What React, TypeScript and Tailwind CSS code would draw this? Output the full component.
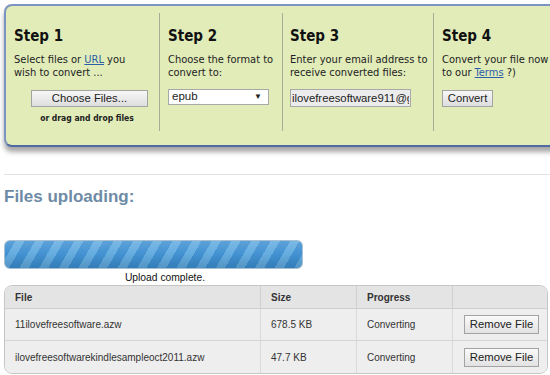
import React from 'react';

const verdana = { fontFamily: '"DejaVu Sans Condensed", Tahoma, Verdana, sans-serif' };

const rows = [
  { name: '11ilovefreesoftware.azw', size: '678.5 KB' },
  { name: 'ilovefreesoftwarekindlesampleoct2011.azw', size: '47.7 KB' },
];

function StepHead({ n }: { n: number }) {
  return <h2 className="pt-[14px] text-[15px] leading-[18px] font-bold text-[#111]">Step {n}</h2>;
}

export default function App() {
  return (
    <div className="w-[550px] h-[375px] overflow-hidden bg-white font-['Liberation_Sans',Arial,sans-serif] text-[#222]">
      {/* converter steps panel */}
      <div
        className="ml-1 mt-1 w-[620px] h-[143px] rounded-[8px] border-2 border-[#7d94c0] border-b-[#4e69a3] bg-[#e1ecb9] shadow-[0_5px_5px_rgba(0,0,0,0.35)] flex"
        style={verdana}
      >
        <div className="mt-[7px] h-[118px] w-[154px] border-r border-[#a9ad98] pl-2">
          <StepHead n={1} />
          <p className="mt-[8px] text-[11px] leading-[13px]">
            Select files or <span className="text-[#2b5ea8] underline">URL</span> you
            <br />
            wish to convert ...
          </p>
          <div className="mt-[11px] ml-[17px] w-[117px] h-[17px] flex items-center justify-center border border-[#a3a3a3] bg-gradient-to-b from-[#f7f7f7] to-[#dedede] text-[11.3px] font-['Liberation_Sans',Arial,sans-serif]">
            Choose Files...
          </div>
          <p className="mt-[6px] w-[146px] text-center text-[8.5px] leading-[11px] font-bold">or drag and drop files</p>
        </div>

        <div className="mt-[7px] h-[118px] w-[123px] border-r border-[#a9ad98] pl-2">
          <StepHead n={2} />
          <p className="mt-[8px] text-[11px] leading-[13px]">
            Choose the format to
            <br />
            convert to:
          </p>
          <div className="mt-[10px] w-[101px] h-[16px] flex items-center justify-between border border-[#a9a9a9] bg-white pl-[3px] pr-[6px] text-[11.5px] font-['Liberation_Sans',Arial,sans-serif]">
            <span>epub</span>
            <span className="text-[8px]">▼</span>
          </div>
        </div>

        <div className="mt-[7px] h-[118px] w-[151px] border-r border-[#a9ad98] pl-[7px]">
          <StepHead n={3} />
          <p className="mt-[8px] text-[11px] leading-[13px] whitespace-nowrap">
            Enter your email address to
            <br />
            receive converted files:
          </p>
          <input
            readOnly
            value="ilovefreesoftware911@gmail.com"
            className="mt-[10px] w-[121px] h-[18px] border border-[#a9a9a9] bg-[#ececec] px-[1px] text-[11.3px] text-[#222] outline-none font-['Liberation_Sans',Arial,sans-serif]"
          />
        </div>

        <div className="mt-[7px] h-[118px] flex-1 pl-2">
          <StepHead n={4} />
          <p className="mt-[8px] text-[11px] leading-[13px] whitespace-nowrap">
            Convert your file now (and agree
            <br />
            to our <span className="text-[#2b5ea8] underline">Terms</span> ?)
          </p>
          <div className="mt-[11px] w-[51px] h-[17px] flex items-center justify-center border border-[#a3a3a3] bg-gradient-to-b from-[#f7f7f7] to-[#dedede] text-[11.3px] font-['Liberation_Sans',Arial,sans-serif]">
            Convert
          </div>
        </div>
      </div>

      <div className="ml-1 mt-[27px] border-t border-[#e3e3e3]" />

      <h1 className="ml-1 mt-[11px] text-[17px] leading-[22px] font-bold text-[#6e8ba6]">Files uploading:</h1>

      {/* progress bar */}
      <div className="ml-1 mt-[32px] w-[299px] h-[29px] rounded-[6px] border border-[#a9bfd2] bg-[linear-gradient(to_bottom,rgba(255,255,255,0.18),rgba(255,255,255,0.05)_45%,rgba(0,0,0,0.12)),repeating-linear-gradient(120deg,#3a8dd0_0px,#3a8dd0_9px,#5ea9df_9px,#5ea9df_17px)]" />
      <p className="mt-[2px] w-[330px] text-center text-[10.3px] leading-[13px] text-[#111]">Upload complete.</p>

      {/* file table */}
      <div className="ml-1 mt-[1px] w-[544px] rounded-[8px] border border-[#c6c6c6] overflow-hidden text-[10px] text-[#333]">
        <div className="grid grid-cols-[256px_96px_96px_1fr] h-[23px] bg-[#e4e4e4] font-bold border-b border-[#cfcfcf]">
          <div className="border-r border-[#d0d0d0] pl-[10px] flex items-center">File</div>
          <div className="border-r border-[#d0d0d0] pl-[10px] flex items-center">Size</div>
          <div className="border-r border-[#d0d0d0] pl-[10px] flex items-center">Progress</div>
          <div />
        </div>
        {rows.map((r, i) => (
          <div
            key={r.name}
            className={`grid grid-cols-[256px_96px_96px_1fr] h-[32px] bg-[#eeeeee] ${i === 0 ? 'border-b border-[#d4d4d4]' : ''}`}
          >
            <div className="border-r border-[#dadada] pl-[10px] flex items-center">{r.name}</div>
            <div className="border-r border-[#dadada] pl-[10px] flex items-center">{r.size}</div>
            <div className="border-r border-[#dadada] pl-[10px] flex items-center">Converting</div>
            <div className="flex items-center pl-[11px]">
              <div className="w-[75px] h-[19px] flex items-center justify-center border border-[#a3a3a3] bg-gradient-to-b from-[#fafafa] to-[#e2e2e2] text-[11.3px] text-[#222]">
                Remove File
              </div>
            </div>
          </div>
        ))}
      </div>
    </div>
  );
}
